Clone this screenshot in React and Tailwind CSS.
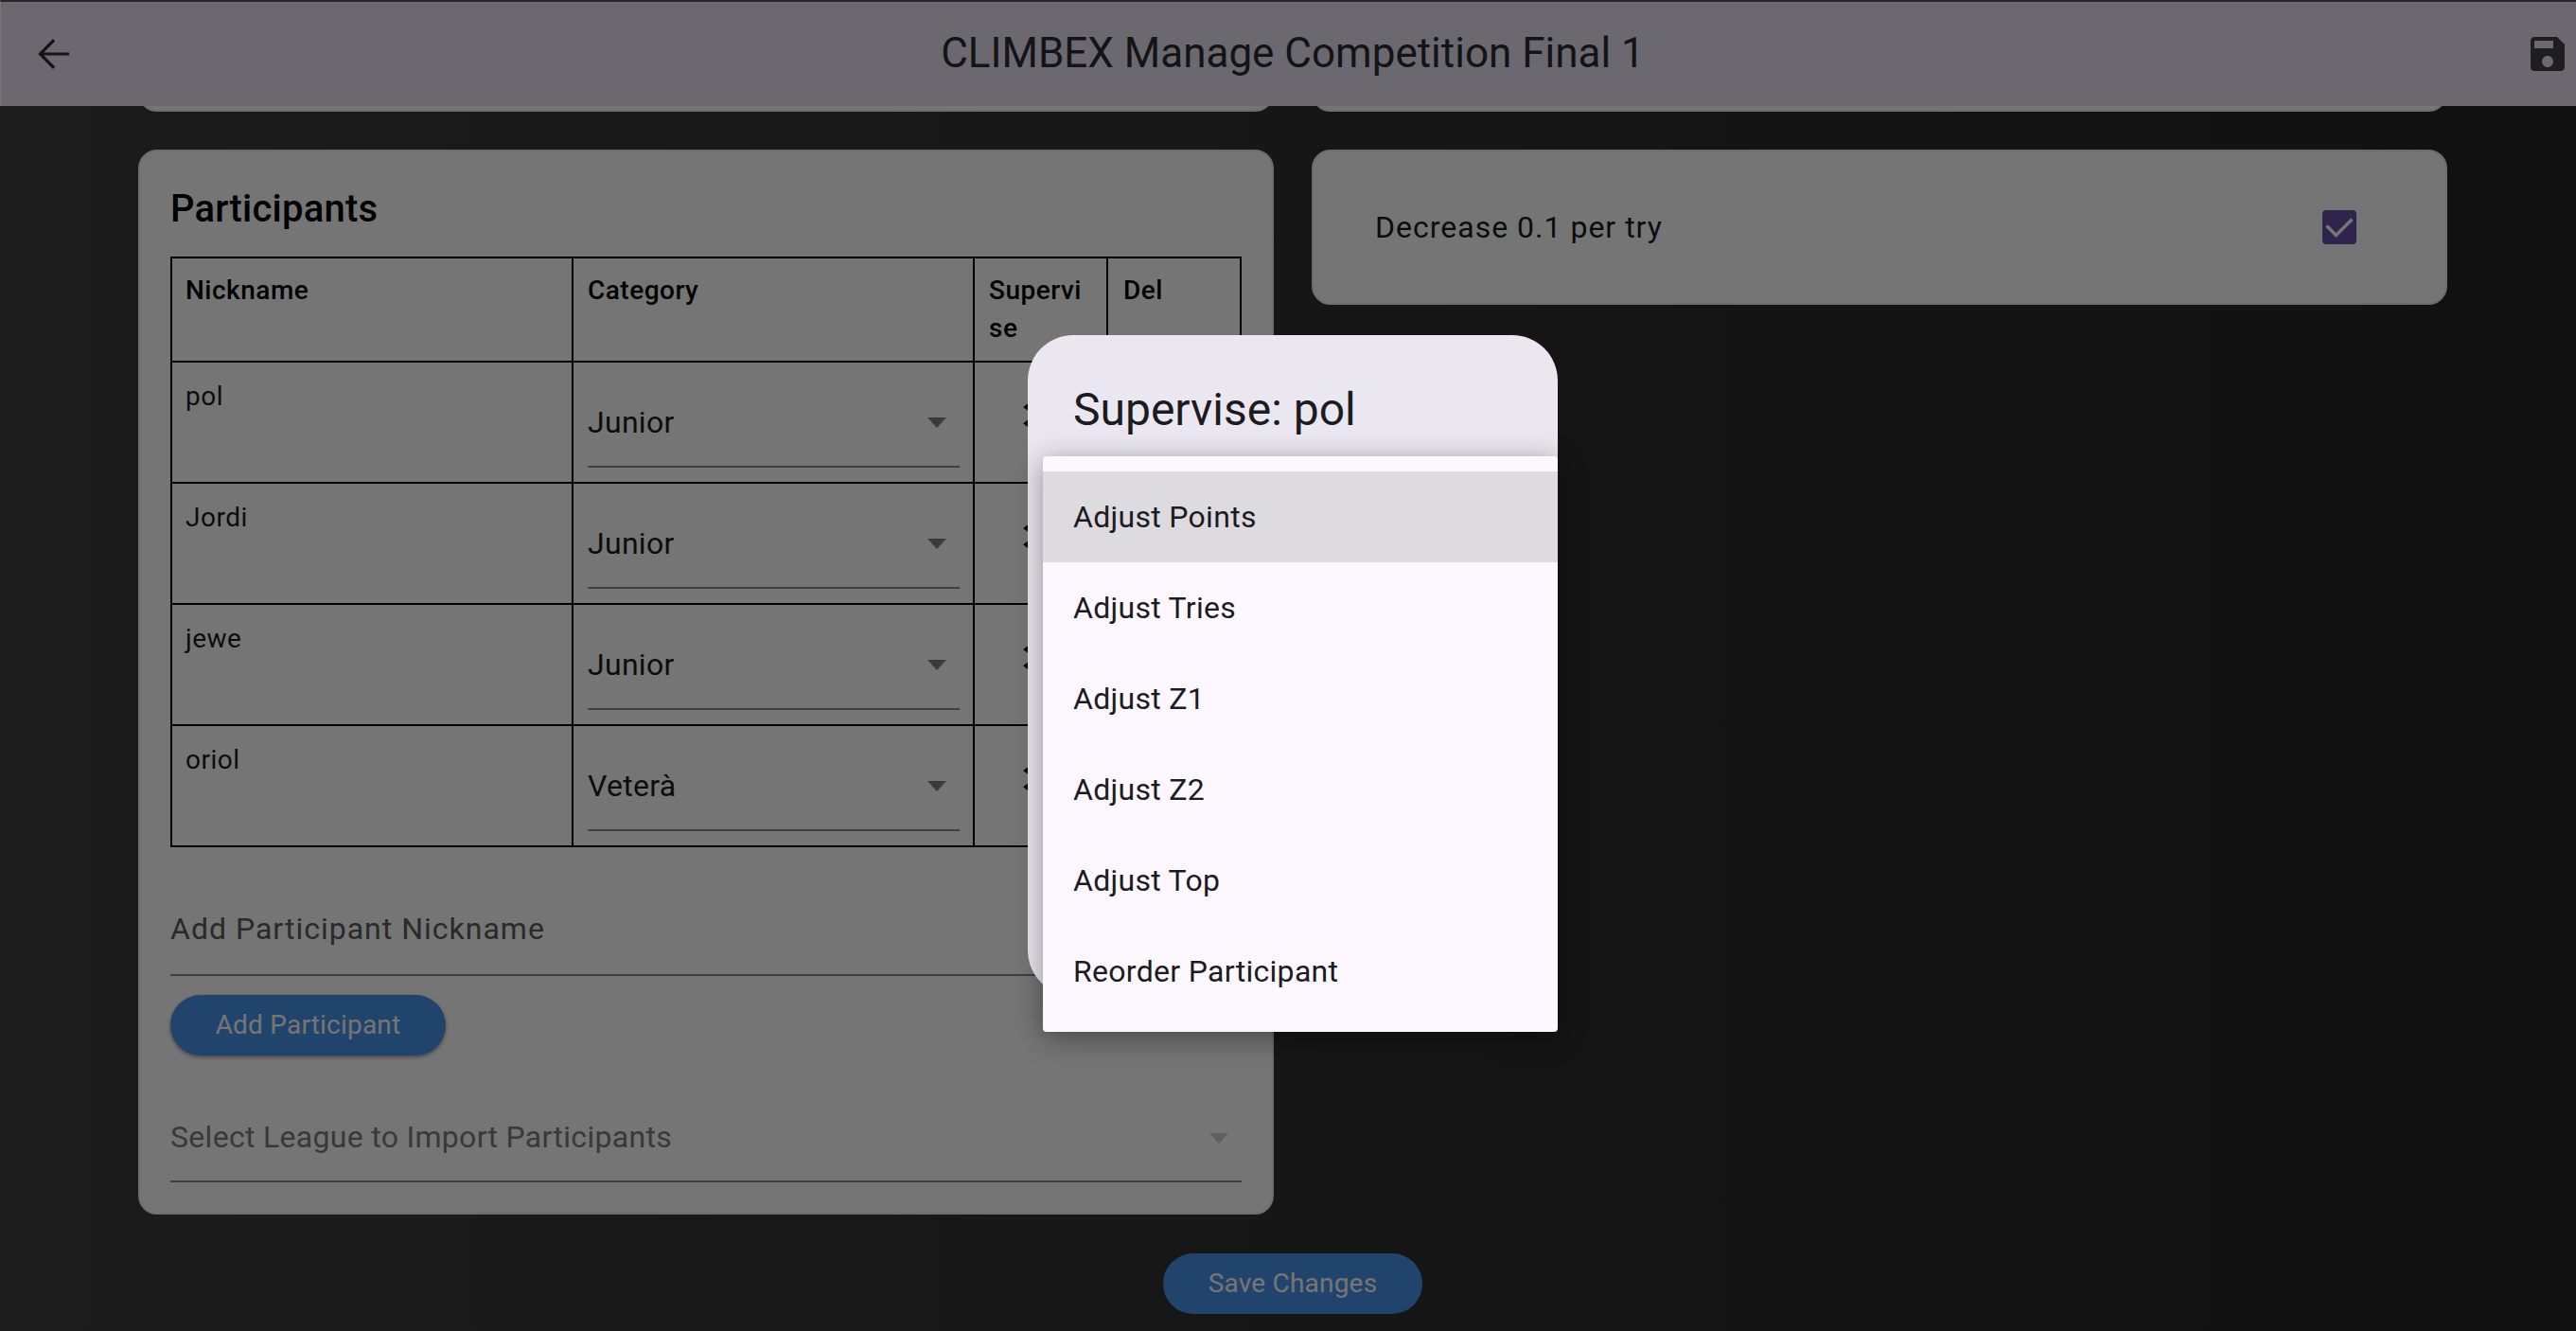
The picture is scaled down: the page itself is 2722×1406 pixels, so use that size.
import React from 'react';

const rows = [
  { name: 'pol', category: 'Junior' },
  { name: 'Jordi', category: 'Junior' },
  { name: 'jewe', category: 'Junior' },
  { name: 'oriol', category: 'Veterà' },
];

const menuItems = ['Adjust Points', 'Adjust Tries', 'Adjust Z1', 'Adjust Z2', 'Adjust Top', 'Reorder Participant'];

const Caret = ({ className }) => (
  <svg viewBox="0 0 20 11" className={`w-[20px] h-[11px] mt-[2px] ${className}`}>
    <path d="M0 0h20L10 11z" fill="currentColor" />
  </svg>
);

const App = () => {
  return (
    <div className="relative w-[2722px] h-[1406px] overflow-hidden font-[Roboto,sans-serif] text-[#1c1b1f] bg-linear-to-r from-[#3d3d3d] to-[#262626]">
      <header className="relative z-10 h-[112px] grid grid-cols-[1fr_auto_1fr] items-center border-t-2 border-l border-t-[#555] border-l-white bg-[#e9e4f1]">
        <button className="w-[112px] flex justify-center text-[#2c2c33]">
          <svg viewBox="0 0 24 24" className="w-[48px] h-[48px]" fill="currentColor">
            <path d="M20 11.2H6.6l6-6-1.100-1.200L3.600 12l7.900 8 1.100-1.200-6-6H20z" />
          </svg>
        </button>
        <h1 className="text-[44px] leading-[52px] text-[#2c2c33] ml-[9px] -mt-[2px]">CLIMBEX Manage Competition Final 1</h1>
        <button className="justify-self-end w-[54px] flex text-[#434349]">
          <svg viewBox="0 0 24 24" className="w-[48px] h-[48px]" fill="currentColor">
            <path d="M17 3H5c-1.110 0-2 .9-2 2v14c0 1.100.89 2 2 2h14c1.100 0 2-.9 2-2V7l-4-4zm-5 16c-1.660 0-3-1.340-3-3s1.340-3 3-3 3 1.340 3 3-1.340 3-3 3zm3-10H5V5h10v4z" />
          </svg>
        </button>
      </header>

      <main className="pl-[146px] pr-[136px] flex flex-col">
        {/* cards scrolled away under the app bar */}
        <div className="grid grid-cols-2 gap-[40px]">
          <div className="h-[6px] overflow-hidden flex items-end">
            <div className="h-[40px] w-full shrink-0 rounded-[20px] bg-white border-2 border-[#f0f0f0]" />
          </div>
          <div className="h-[6px] overflow-hidden flex items-end">
            <div className="h-[40px] w-full shrink-0 rounded-[20px] bg-white border-2 border-[#f0f0f0]" />
          </div>
        </div>

        <div className="mt-[40px] flex gap-[40px] items-start">
          <section className="w-[1200px] h-[1125px] rounded-[20px] bg-white border-2 border-[#eeeeee] px-[32px] pt-[36px]">
            <h2 className="text-[40px] leading-[50px] font-medium tracking-[.2px] text-black mb-[25px]">Participants</h2>
            <table className="w-[1130px] table-fixed border-collapse border-2 border-black">
              <colgroup>
                <col className="w-[424px]" />
                <col className="w-[424px]" />
                <col className="w-[141px]" />
                <col className="w-[141px]" />
              </colgroup>
              <thead>
                <tr className="h-[110px] align-top text-left text-[28px] leading-[40px] tracking-[.5px] text-black">
                  <th className="border-2 border-black px-[14px] pt-[14px] font-medium">Nickname</th>
                  <th className="border-2 border-black pl-[15px] pr-[14px] pt-[14px] font-medium">Category</th>
                  <th className="border-2 border-black pl-[15px] pr-[26px] pt-[14px] font-medium break-all">Supervise</th>
                  <th className="border-2 border-black pl-[16px] pr-[14px] pt-[14px] font-medium">Del</th>
                </tr>
              </thead>
              <tbody>
                {rows.map((row) => (
                  <tr key={row.name} className="h-[128px] align-top">
                    <td className="border-2 border-black px-[14px] pt-[16px] text-[28px] leading-[40px] tracking-[.5px]">{row.name}</td>
                    <td className="border-2 border-black pl-[15px] pr-[14px] pt-[16px]">
                      <div className="h-[95px] flex items-center justify-between pr-[14px] border-b-2 border-[#8c8c8c] text-[32px] tracking-[.3px]">
                        {row.category}
                        <Caret className="text-[#828282]" />
                      </div>
                    </td>
                    <td className="border-2 border-black pl-[48px] pt-[38px]">
                      <svg viewBox="0 0 24 30" className="w-[36px] h-[45px]" fill="#1c1b1f">
                        <path d="M10 0l8 6-8 6-8-6zM10 11.500l8 6-8 6-8-6z" />
                      </svg>
                    </td>
                    <td className="border-2 border-black" />
                  </tr>
                ))}
              </tbody>
            </table>

            <div className="mt-[33px] h-[103px] pt-[4px] flex items-center border-b-2 border-[#8c8c8c] text-[32px] tracking-[1px] text-[#5c5c5c]">
              Add Participant Nickname
            </div>
            <button className="mt-[20px] h-[64px] w-[291px] rounded-full bg-[#4894eb] text-white text-[28px] tracking-[.2px] shadow-[0_2px_4px_rgba(0,0,0,.4)]">
              Add Participant
            </button>
            <div className="mt-[40px] h-[94px] flex items-center justify-between pr-[14px] border-b-2 border-[#8c8c8c] text-[32px] tracking-[.3px] text-[#7c7c7c]">
              Select League to Import Participants
              <Caret className="text-[#cfcfcf]" />
            </div>
          </section>

          <section className="w-[1200px] h-[164px] flex items-center justify-between rounded-[20px] bg-white border-2 border-[#eeeeee] pl-[65px] pr-[94px]">
            <span className="text-[32px] tracking-[1px]">Decrease 0.1 per try</span>
            <span className="w-[36px] h-[36px] rounded-[4px] bg-[#6750a4]">
              <svg viewBox="0 0 36 36" className="w-[36px] h-[36px]" fill="none" stroke="white" strokeWidth="3.500">
                <path d="M4.500 16.500l10 10 17-17" />
              </svg>
            </span>
          </section>
        </div>

        <div className="mt-[41px] pl-[1083px]">
          <button className="h-[64px] w-[274px] rounded-full bg-[#4894eb] text-white text-[28px] tracking-[.2px]">
            Save Changes
          </button>
        </div>
      </main>

      {/* modal barrier */}
      <div className="absolute inset-0 z-20 bg-black/[.54]" />

      <div className="absolute z-30 left-[1086px] top-[354px] w-[560px] h-[698px] rounded-[48px] bg-[#ebe7f0] text-[#1c1b1f]">
        <h3 className="pl-[48px] pt-[51px] text-[48px] leading-[56px]">Supervise: pol</h3>
        <ul className="absolute left-[16px] top-[128px] w-[544px] h-[608px] py-[16px] rounded-[4px] bg-[#fdf8ff] text-[32px] tracking-[.3px] shadow-[0_6px_30px_rgba(0,0,0,.4)]">
          {menuItems.map((item, i) => (
            <li key={item} className={`h-[96px] flex items-center pl-[32px] ${i === 0 ? 'bg-[#dedbe0]' : ''}`}>
              {item}
            </li>
          ))}
        </ul>
      </div>
    </div>
  );
};

export default App;
